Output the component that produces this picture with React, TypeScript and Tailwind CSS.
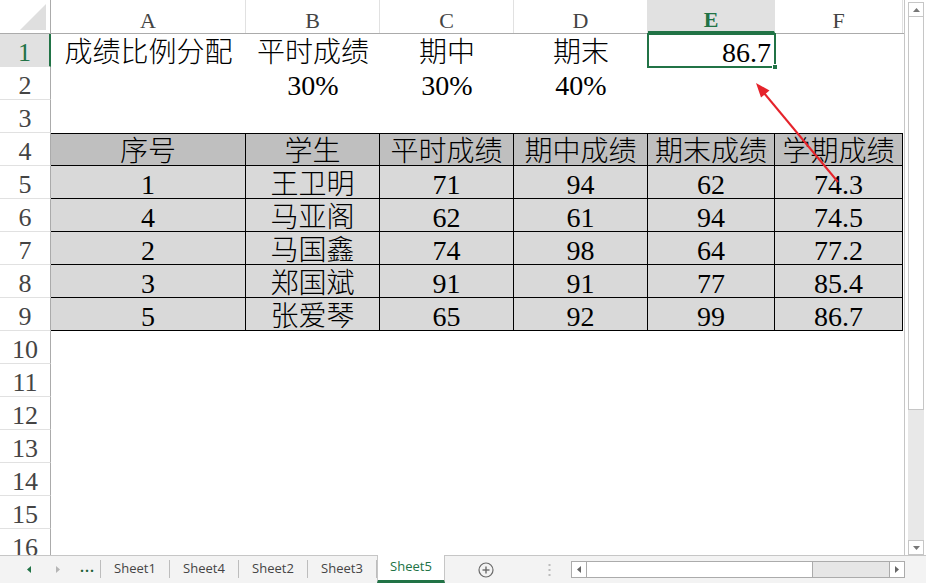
import React from "react";

const colW = ["w-[195px]", "w-[134px]", "w-[134px]", "w-[134px]", "w-[127px]", "w-[128px]"];
const letters = ["A", "B", "C", "D", "E", "F"];

const tableRows: string[][] = [
  ["序号", "学生", "平时成绩", "期中成绩", "期末成绩", "学期成绩"],
  ["1", "王卫明", "71", "94", "62", "74.3"],
  ["4", "马亚阁", "62", "61", "94", "74.5"],
  ["2", "马国鑫", "74", "98", "64", "77.2"],
  ["3", "郑国斌", "91", "91", "77", "85.4"],
  ["5", "张爱琴", "65", "92", "99", "86.7"],
];

const cellFont = "font-['Liberation_Serif','Noto_Sans_CJK_SC',serif] font-light text-[28px] leading-none text-black";

function RowHeader({ n, active }: { n: number; active?: boolean }) {
  return (
    <div
      className={
        "w-[51px] shrink-0 h-full flex items-center justify-center border-b border-b-[#e1e1e1] font-['Liberation_Serif',serif] text-[26px] leading-none pt-[5px] " +
        (active
          ? "bg-[#e1e1e1] text-[#217346] border-r-2 border-r-[#217346]"
          : "bg-white text-[#444] border-r border-r-[#ababab]")
      }
    >
      {n}
    </div>
  );
}

function PlainRow({ n, cells }: { n: number; cells: (string | null)[] }) {
  return (
    <div className="flex h-[33px] shrink-0">
      <RowHeader n={n} active={n === 1} />
      {colW.map((w, i) => {
        const v = cells[i];
        const isE1 = n === 1 && i === 4;
        return (
          <div
            key={i}
            className={
              w +
              " shrink-0 h-full flex items-center relative pt-[5px] " +
              cellFont +
              (isE1 ? " justify-end pr-[4px]" : " justify-center")
            }
          >
            {v}
            {isE1 && (
              <>
                <div className="absolute left-[-1px] top-[-1px] right-[-1px] bottom-[-1px] border-2 border-[#217346]" />
                <div className="absolute right-[-3px] bottom-[-3px] w-[6px] h-[6px] bg-[#217346] border border-white" />
              </>
            )}
          </div>
        );
      })}
      <div className="flex-1" />
    </div>
  );
}

function TableRow({ n, cells, header, first }: { n: number; cells: string[]; header?: boolean; first?: boolean }) {
  return (
    <div className="flex h-[33px] shrink-0">
      <RowHeader n={n} />
      {colW.map((w, i) => (
        <div
          key={i}
          className={
            w +
            " shrink-0 h-full flex items-center justify-center border-r border-b border-black pt-[5px] " +
            cellFont +
            (header ? " bg-[#bfbfbf]" : " bg-[#d9d9d9]") +
            (first ? " border-t" : "")
          }
        >
          {cells[i]}
        </div>
      ))}
      <div className="flex-1" />
    </div>
  );
}

function Tri({ dir, color }: { dir: "up" | "down" | "left" | "right"; color: string }) {
  const pts =
    dir === "up"
      ? "0,4 7,4 3.5,0"
      : dir === "down"
      ? "0,0 7,0 3.5,4"
      : dir === "left"
      ? "4,0 4,7 0,3.5"
      : "0,0 0,7 4,3.5";
  const w = dir === "up" || dir === "down" ? 7 : 4;
  const h = dir === "up" || dir === "down" ? 4 : 7;
  return (
    <svg width={w} height={h} viewBox={`0 0 ${w} ${h}`}>
      <polygon points={pts} fill={color} />
    </svg>
  );
}

export default function App() {
  const rows: React.ReactNode[] = [];
  rows.push(<PlainRow key={1} n={1} cells={["成绩比例分配", "平时成绩", "期中", "期末", "86.7", null]} />);
  rows.push(<PlainRow key={2} n={2} cells={[null, "30%", "30%", "40%", null, null]} />);
  rows.push(<PlainRow key={3} n={3} cells={[null, null, null, null, null, null]} />);
  tableRows.forEach((r, idx) => {
    rows.push(<TableRow key={4 + idx} n={4 + idx} cells={r} header={idx === 0} first={idx === 0} />);
  });
  for (let n = 10; n <= 16; n++) {
    rows.push(<PlainRow key={n} n={n} cells={[null, null, null, null, null, null]} />);
  }

  const tabs = ["Sheet1", "Sheet4", "Sheet2", "Sheet3"];

  return (
    <div className="w-[926px] h-[583px] bg-white relative overflow-hidden flex flex-col select-none">
      <div className="flex h-[555px] shrink-0">
        {/* grid */}
        <div className="w-[905px] shrink-0 flex flex-col overflow-hidden border-r border-r-[#c6c6c6]">
          {/* column header */}
          <div className="flex h-[34px] shrink-0 border-b border-b-[#ababab]">
            <div className="w-[51px] shrink-0 h-full border-r border-r-[#ababab] bg-white flex items-end justify-end pr-[4px] pb-[3px]">
              <svg width="26" height="26" viewBox="0 0 26 26">
                <polygon points="26,0 26,26 0,26" fill="#dfdfdf" />
              </svg>
            </div>
            {colW.map((w, i) => (
              <div
                key={i}
                className={
                  w +
                  " shrink-0 h-full flex items-center justify-center pt-[8px] font-['Liberation_Serif',serif] text-[22px] leading-none border-r border-r-[#e1e1e1] " +
                  (i === 4 ? "bg-[#e1e1e1] text-[#217346] font-bold border-b-2 border-b-[#217346]" : "bg-white text-[#444]")
                }
              >
                {letters[i]}
              </div>
            ))}
            <div className="flex-1 bg-white" />
          </div>
          {rows}
        </div>
        {/* vertical scrollbar */}
        <div className="flex-1 flex flex-col pl-[3px] pr-[2px] pt-[2px] bg-white">
          <div className="h-[15px] shrink-0 border border-[#c6c6c6] bg-white flex items-center justify-center">
            <Tri dir="up" color="#777" />
          </div>
          <div className="h-[393px] shrink-0 border-x border-b border-[#c6c6c6] bg-white" />
          <div className="flex-1 bg-[#e8e8e8]" />
          <div className="h-[15px] shrink-0 border border-[#c6c6c6] bg-white flex items-center justify-center">
            <Tri dir="down" color="#777" />
          </div>
        </div>
      </div>

      {/* bottom bar */}
      <div className="flex-1 flex items-stretch bg-[#f3f3f3] border-t border-t-[#c6c6c6] font-['Open_Sans','Noto_Sans',sans-serif]">
        <div className="w-[100px] shrink-0 flex items-center">
          <div className="w-[27px]" />
          <Tri dir="left" color="#217346" />
          <div className="w-[25px]" />
          <Tri dir="right" color="#b5b5b5" />
          <div className="ml-[20px] text-[14px] font-bold text-[#1e5f36] leading-none -mt-[6px] tracking-[1px]">...</div>
        </div>
        <div className="w-[1px] bg-[#bdbdbd] my-[4px] mb-[5px]" />
        {tabs.map((t) => (
          <div key={t} className="flex items-stretch">
            <div className="w-[68px] flex items-center justify-center text-[13px] text-[#444] pb-[1px]">{t}</div>
            <div className="w-[1px] bg-[#bdbdbd] my-[4px] mb-[5px]" />
          </div>
        ))}
        <div className="w-[68px] -mt-[1px] bg-white border-x border-[#c6c6c6] border-b-[3px] border-b-[#217346] flex items-center justify-center text-[13px] text-[#217346] pb-[1px]">
          Sheet5
        </div>
        <div className="w-[82px] flex items-center justify-center">
          <svg width="16" height="16" viewBox="0 0 16 16">
            <circle cx="8" cy="8" r="7" fill="none" stroke="#6a6a6a" strokeWidth="1.2" />
            <line x1="8" y1="4.5" x2="8" y2="11.5" stroke="#6a6a6a" strokeWidth="1.4" />
            <line x1="4.5" y1="8" x2="11.5" y2="8" stroke="#6a6a6a" strokeWidth="1.4" />
          </svg>
        </div>
        <div className="w-[44px] flex items-center justify-center">
          <svg width="3" height="12" viewBox="0 0 3 12">
            <rect x="0.5" y="0" width="2" height="2" fill="#bcbcbc" />
            <rect x="0.5" y="5" width="2" height="2" fill="#bcbcbc" />
            <rect x="0.5" y="10" width="2" height="2" fill="#bcbcbc" />
          </svg>
        </div>
        <div className="w-[334px] shrink-0 flex items-center">
          <div className="h-[17px] w-full flex border border-[#ababab]">
            <div className="w-[15px] h-full bg-white border-r border-[#ababab] flex items-center justify-center">
              <Tri dir="left" color="#666" />
            </div>
            <div className="w-[226px] h-full bg-white border-r border-[#ababab]" />
            <div className="flex-1 h-full bg-[#e6e6e6]" />
            <div className="w-[15px] h-full bg-white border-l border-[#ababab] flex items-center justify-center">
              <Tri dir="right" color="#666" />
            </div>
          </div>
        </div>
        <div className="flex-1" />
      </div>

      {/* red arrow annotation */}
      <svg className="absolute left-0 top-0 pointer-events-none" width="926" height="583" viewBox="0 0 926 583">
        <line x1="838" y1="182" x2="764" y2="93" stroke="#e5232b" strokeWidth="2" />
        <polygon points="756,83 769.5,90.5 761,97.5" fill="#e5232b" />
      </svg>
    </div>
  );
}
